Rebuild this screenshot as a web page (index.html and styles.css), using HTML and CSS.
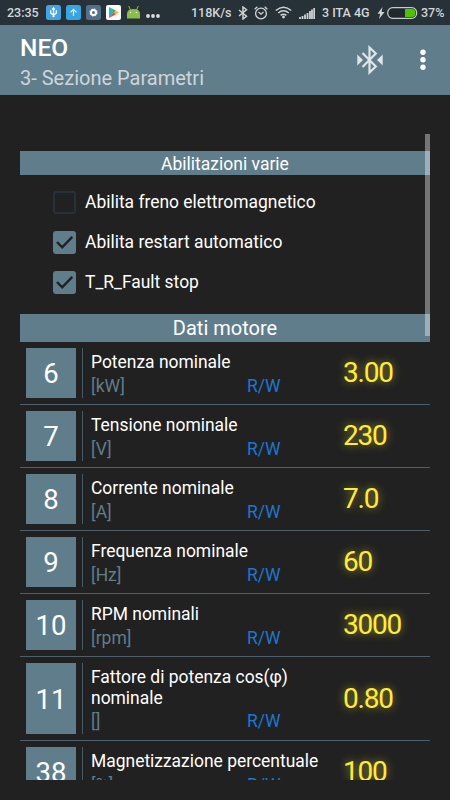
FILE: index.html
```html
<!DOCTYPE html>
<html lang="it">
<head>
<meta charset="utf-8">
<title>NEO</title>
<link rel="stylesheet" href="styles.css">
</head>
<body>
<header class="status">
  <span class="clock">23:35</span>
  <div class="notifications">
    <svg class="tile" viewBox="0 0 15 15"><rect width="15" height="15" rx="2.5" fill="#42a5df"/><path d="M7.5 3v8M4.7 5.2v2.2q0 1.6 2.8 2.1Q10.3 9 10.3 7.4V5.2M6.2 4.5 7.5 3l1.3 1.5" fill="none" stroke="#fff" stroke-width="1.3"/><circle cx="7.5" cy="11.2" r="1.1" fill="#fff"/></svg>
    <svg class="tile" viewBox="0 0 15 15"><rect width="15" height="15" rx="2.5" fill="#35a6e2"/><path d="M7.5 11V4.5M4.5 7.4l3-3 3 3" fill="none" stroke="#e8f6ff" stroke-width="1.2"/></svg>
    <svg class="tile" viewBox="0 0 15 15"><rect width="15" height="15" rx="2.5" fill="#52708b"/><circle cx="7.5" cy="7.5" r="2.5" fill="none" stroke="#fff" stroke-width="2"/><circle cx="7.5" cy="7.5" r="3.7" fill="none" stroke="#fff" stroke-width=".8" stroke-dasharray="1.45 1.45"/></svg>
    <svg class="tile" viewBox="0 0 15 15"><rect width="15" height="15" rx="2" fill="#fafafa"/><path d="M3 2v11l5-5.5z" fill="#20b8d8"/><path d="M3 2l7.500 4-2.500 2z" fill="#38b36a"/><path d="M3 13l7.500-4-2.500-2z" fill="#e94b4b"/><path d="M9.500 5.500 13 7.500l-3.500 2L8 7.500z" fill="#f5bd28"/></svg>
    <svg class="tile" viewBox="0 0 15 15"><path d="M1 13.500V9Q1 4 7.500 4T14 9v4.500z" fill="#8bbd48"/><path d="M4.500 5 2.700 1M10.500 5l1.800-4" stroke="#8bbd48"/><circle cx="4.500" cy="7.500" r=".8" fill="#fff"/><circle cx="10.500" cy="7.500" r=".8" fill="#fff"/></svg>
    <svg class="more" viewBox="0 0 14 15"><g fill="#ddd"><circle cx="2" cy="11" r="1.900"/><circle cx="7" cy="11" r="1.900"/><circle cx="12" cy="11" r="1.900"/></g></svg>
  </div>
  <span class="speed">118K/s</span>
  <svg class="s-bt" viewBox="0 0 10 14"><path d="M1 4l7.500 6.300L5 13V1l3.500 2.700L1 10" fill="none" stroke="#d0d3d5" stroke-width="1.500"/></svg>
  <svg class="s-alarm" viewBox="0 0 14 14"><g fill="none" stroke="#d0d3d5" stroke-width="1.300"><circle cx="7" cy="7.500" r="5.400"/><path d="M4.500 6 7 8.200 9.500 6M.7 3.200 3.300.8M13.300 3.200 10.700.8"/></g></svg>
  <svg class="s-wifi" viewBox="0 0 17 13"><g fill="none" stroke="#d0d3d5" stroke-width="1.500"><path d="M.8 4.500q7.700-6.600 15.400 0M3.200 7q5.300-4.500 10.600 0M5.600 9.400q2.900-2.400 5.800 0"/></g><circle cx="8.500" cy="11" r="1.400" fill="#d0d3d5"/></svg>
  <svg class="s-signal" viewBox="0 0 16 12"><path d="M1 12v-2M3.500 12V9M6 12V7.500M8.500 12V6M11 12V4M13 12V2.500M15.200 12V1" stroke="#d0d3d5" stroke-width="1.800"/></svg>
  <span class="carrier">3 ITA 4G</span>
  <svg class="s-bolt" viewBox="0 0 8 12"><path d="M5.500 0 .5 6.700h2.700L2 12l5.500-7H4.600z" fill="#d0d3d5"/></svg>
  <svg class="s-battery" viewBox="0 0 31 12"><rect x=".7" y=".7" width="29" height="10.600" rx="5" fill="#20282c" stroke="#c8cccf" stroke-width="1.200"/><path d="M18 2h7q3.500 0 3.500 4T25 10h-7z" fill="#4bc400"/></svg>
  <span class="percent">37%</span>
</header>

<div class="appbar">
  <div class="titles">
    <h1>NEO</h1>
    <p>3- Sezione Parametri</p>
  </div>
  <svg class="bluetooth" viewBox="0 0 26 30"><path d="M5.500 8 18.800 21.500 12.500 27.500V2.500L18.800 8.500 5.500 22" fill="none" stroke="#dfe5e8" stroke-width="2.200"/><path d="M.3 9.500v11L6 15zM25.700 9.500v11L20 15z" fill="#dfe5e8"/></svg>
  <svg class="menu" viewBox="0 0 6 22"><g fill="#fff"><circle cx="3" cy="3.300" r="2.700"/><circle cx="3" cy="10.800" r="2.700"/><circle cx="3" cy="18.300" r="2.700"/></g></svg>
</div>

<main class="list">
  <div class="scrollbar"></div>
  <h2 class="section small">Abilitazioni varie</h2>
  <div class="checks">
    <div class="check"><span class="box"></span><span>Abilita freno elettromagnetico</span></div>
    <div class="check"><span class="box on"><svg viewBox="0 0 23 23"><path d="M4 11 9.200 16.300 19.300 5.800"/></svg></span><span>Abilita restart automatico</span></div>
    <div class="check"><span class="box on"><svg viewBox="0 0 23 23"><path d="M4 11 9.200 16.300 19.300 5.800"/></svg></span><span>T_R_Fault stop</span></div>
  </div>
  <h2 class="section">Dati motore</h2>
  <div class="row"><div class="num">6</div><div class="info"><div class="name">Potenza nominale</div><div class="meta"><span class="unit">[kW]</span><span class="rw">R/W</span></div></div><div class="value">3.00</div></div>
  <div class="row"><div class="num">7</div><div class="info"><div class="name">Tensione nominale</div><div class="meta"><span class="unit">[V]</span><span class="rw">R/W</span></div></div><div class="value">230</div></div>
  <div class="row"><div class="num">8</div><div class="info"><div class="name">Corrente nominale</div><div class="meta"><span class="unit">[A]</span><span class="rw">R/W</span></div></div><div class="value">7.0</div></div>
  <div class="row"><div class="num">9</div><div class="info"><div class="name">Frequenza nominale</div><div class="meta"><span class="unit">[Hz]</span><span class="rw">R/W</span></div></div><div class="value">60</div></div>
  <div class="row"><div class="num">10</div><div class="info"><div class="name">RPM nominali</div><div class="meta"><span class="unit">[rpm]</span><span class="rw">R/W</span></div></div><div class="value">3000</div></div>
  <div class="row tall"><div class="num">11</div><div class="info"><div class="name">Fattore di potenza cos(φ) nominale</div><div class="meta"><span class="unit">[]</span><span class="rw">R/W</span></div></div><div class="value">0.80</div></div>
  <div class="row"><div class="num">38</div><div class="info"><div class="name">Magnetizzazione percentuale</div><div class="meta"><span class="unit">[%]</span><span class="rw">R/W</span></div></div><div class="value">100</div></div>
</main>
</body>
</html>
```
FILE: styles.css
```css
* { box-sizing: border-box; margin: 0; padding: 0; }
body {
  width: 450px;
  height: 800px;
  overflow: hidden;
  background: #212121;
  color: #fff;
  font-family: Roboto, sans-serif;
}
svg { display: block; flex: none; }
.status {
  height: 25px;
  display: flex;
  align-items: center;
  padding-left: 7px;
  background: #263238;
  color: #d3d6d8;
  font-size: 12.5px;
  font-weight: 500;
  white-space: nowrap;
}
.clock { width: 39px; }
.notifications { display: flex; gap: 5px; width: 145px; }
.tile { width: 15px; height: 15px; }
.more { width: 14px; height: 15px; }
.speed { width: 47px; }
.s-bt { width: 10px; height: 14px; margin-right: 6px; }
.s-alarm { width: 14px; height: 14px; margin-right: 7px; }
.s-wifi { width: 17px; height: 13px; margin-right: 7px; }
.s-signal { width: 16px; height: 12px; margin-right: 7px; }
.carrier { width: 55px; }
.s-bolt { width: 8px; height: 12px; margin-right: 2px; }
.s-battery { width: 31px; height: 12px; margin-right: 3px; }
.appbar {
  height: 70px;
  display: flex;
  align-items: center;
  background: #607d8b;
}
.titles { width: 357px; padding: 6px 0 0 20px; }
h1 { font-size: 24.5px; line-height: 30px; font-weight: 500; }
.titles p { font-size: 20px; line-height: 30px; color: #cdd5da; }
.bluetooth { width: 26px; height: 30px; margin-right: 37px; }
.menu { width: 6px; height: 22px; }
.list {
  position: relative;
  height: 646px;
  margin: 39px 20px 0;
  padding-top: 17px;
  overflow: hidden;
}
.scrollbar {
  position: absolute;
  top: 0;
  right: 0;
  width: 5px;
  height: 202px;
  background: rgba(255, 255, 255, .38);
}
.section {
  height: 28px;
  line-height: 29px;
  background: #607d8b;
  text-align: center;
  font-size: 20px;
  font-weight: 400;
}
.section.small { height: 24px; line-height: 26px; font-size: 17.5px; }
.checks { height: 139px; padding: 7px 0 0 33px; }
.check { display: flex; align-items: center; gap: 9px; height: 40px; font-size: 17.45px; }
.box { width: 23px; height: 23px; border: 2px solid #263238; border-radius: 3px; }
.box.on { border: 0; background: #607d8b; }
.box path { fill: none; stroke: #212121; stroke-width: 2.4; }
.row {
  display: flex;
  height: 63px;
  padding: 6px;
  border-bottom: 1px solid #4e5f69;
}
.row.tall { height: 84px; }
.num {
  width: 50px;
  margin-right: 1px;
  display: flex;
  align-items: center;
  justify-content: center;
  padding-top: 1px;
  background: #607d8b;
  font-size: 27.5px;
}
.info {
  width: 247px;
  margin-left: 5px;
  padding: 4px 0 0 8px;
  border-left: 1px solid #455a64;
}
.name { width: 236px; font-size: 17.45px; line-height: 20.5px; }
.meta { display: flex; margin-top: 1px; font-size: 17.5px; line-height: 24px; }
.unit { width: 156px; color: #607d8b; }
.rw { color: #1f75d2; }
.value {
  align-self: center;
  margin-left: 14px;
  color: #ffeb3b;
  font-size: 28px;
  line-height: 30px;
  letter-spacing: -1.2px;
  text-shadow: 0 0 8px #ffeb3b99;
}
```
